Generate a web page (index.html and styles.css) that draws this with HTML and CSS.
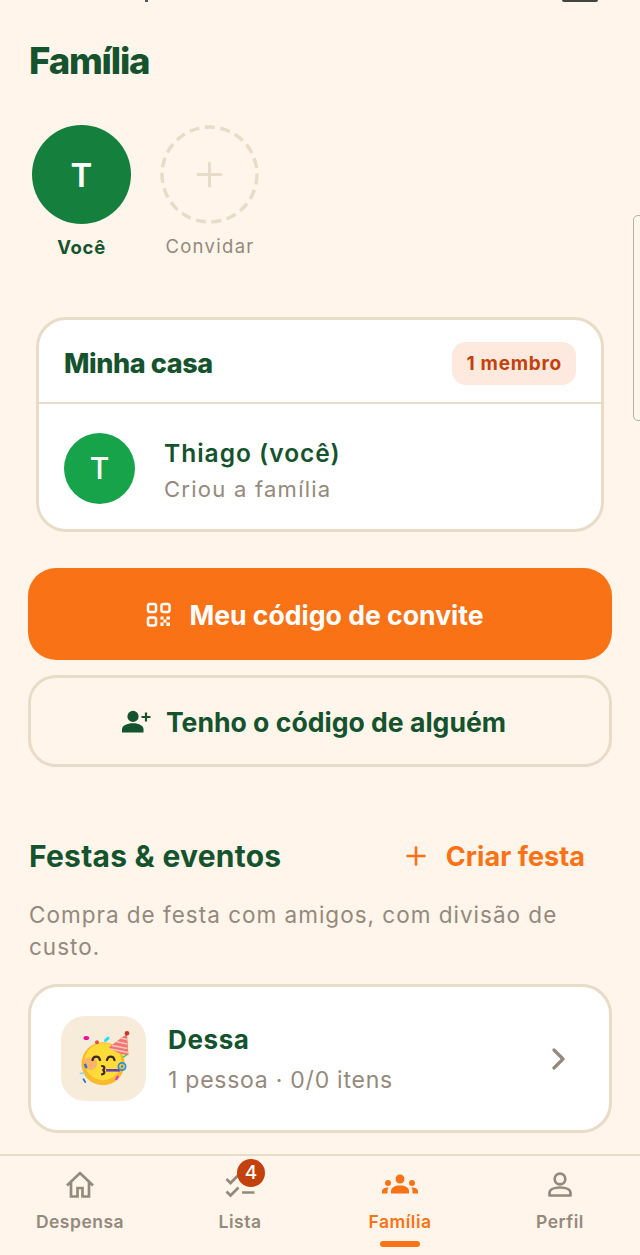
FILE: index.html
```html
<!DOCTYPE html>
<html lang="pt-BR">
<head>
<title>Família</title>
<meta charset="utf-8">
<link rel="stylesheet" href="styles.css">
</head>
<body>

<div class="status-mark"></div>
<div class="status-pill"></div>
<div class="side-handle"></div>

<main class="content">
    <h1 class="page-title">Família</h1>

    <div class="people">
        <div class="person">
            <div class="person-circle person-me">T</div>
            <span class="person-name">Você</span>
        </div>
        <div class="person">
            <svg class="person-circle" width="99" height="99" viewBox="0 0 99 99" fill="none" stroke="#E8DCC8">
                <circle cx="49.500" cy="49.500" r="47.500" stroke-width="3.500" stroke-dasharray="10 5.630"/>
                <path d="M38 49.500h23M49.500 38v23" stroke-width="3" stroke-linecap="round"/>
            </svg>
            <span class="person-name person-invite">Convidar</span>
        </div>
    </div>

    <section class="house">
        <div class="house-head">
            <h2 class="house-title">Minha casa</h2>
            <span class="house-badge">1 membro</span>
        </div>
        <div class="house-row">
            <div class="member-circle">T</div>
            <div class="member-info">
                <div class="member-name">Thiago (você)</div>
                <div class="member-sub">Criou a família</div>
            </div>
        </div>
    </section>

    <button class="btn btn-orange">
        <svg width="26" height="26" viewBox="0 0 26 26" fill="none" stroke="#fff" stroke-width="2.500">
            <rect x="2" y="2" width="8" height="8" rx="2"/>
            <rect x="15.500" y="2" width="8" height="8" rx="2"/>
            <rect x="2" y="15.500" width="8" height="8" rx="2"/>
            <path d="M14.500 14.500h3v3h-3zM20.500 14.500h3.500v3h-3.500zM17.500 17.500h3v3h-3zM14.500 20.500h3V24h-3zM20.500 20.500h3.500V24h-3.500z" fill="#fff" stroke="none"/>
        </svg>
        Meu código de convite
    </button>
    <button class="btn btn-outline">
        <svg width="30" height="24" viewBox="0 0 30 24" fill="#14532D">
            <circle cx="12" cy="6.400" r="5.600"/>
            <path d="M1 22.500v-3.200c0-3.600 5-6 11-6s10.500 2.400 10.500 6v3.200z"/>
            <path d="M25 2.500v9M20.500 7h9" stroke="#14532D" stroke-width="2.200" fill="none"/>
        </svg>
        Tenho o código de alguém
    </button>

    <div class="parties-head">
        <h2 class="parties-title">Festas &amp; eventos</h2>
        <div class="parties-new">
            <svg width="22" height="22" viewBox="0 0 22 22"><path d="M11 2.500v17M2.500 11h17" stroke="#F97316" stroke-width="2.600" stroke-linecap="round" fill="none"/></svg>
            <span>Criar festa</span>
        </div>
    </div>
    <p class="parties-text">Compra de festa com amigos, com divisão de custo.</p>

    <div class="party">
        <div class="party-icon">
            <svg width="85" height="85" viewBox="0 0 85 85">
                <circle cx="42" cy="47.700" r="21.500" fill="#FBB92D"/>
                <circle cx="42" cy="45.700" r="18.500" fill="#FDDC3A"/>
                <circle cx="29.500" cy="47.700" r="6.500" fill="#F8A87A" opacity=".75"/>
                <path d="M47.500 31.500L66 17.700l1.500 21.500c-7-.5-14-3.200-19.700-7.700z" fill="#F0776F"/>
                <path d="M51 29.500l15.500 3M55 25.500l11 2.500M59 22l7 1.500M49.500 33l17.500 3.500" stroke="#FBC4BE" stroke-width="1.500" fill="none"/>
                <circle cx="66" cy="17.200" r="2.300" fill="#C8322D"/>
                <path d="M31.500 44c1-4.500 6.500-4.500 7.500 0M46 44c1-4.500 6.500-4.500 7.500 0" stroke="#3E2723" stroke-width="2.300" stroke-linecap="round" fill="none"/>
                <path d="M41 50c3 0 3 3.500 .5 4 2.500 .6 2.500 4-.5 4.300" stroke="#3E2723" stroke-width="2.200" stroke-linecap="round" fill="none"/>
                <path d="M45 54.300h14" stroke="#6A3FB5" stroke-width="2.600" fill="none"/>
                <circle cx="61" cy="50.500" r="3.600" fill="none" stroke="#2E8FD6" stroke-width="1.800"/>
                <circle cx="61" cy="50.500" r="1.200" fill="#2E8FD6"/>
                <ellipse cx="25.300" cy="22" rx="2.800" ry="2" fill="#F00E9A"/>
                <circle cx="36" cy="26.300" r="2" fill="#E5533D"/>
                <path d="M44.500 24.500l2.500-2.300" stroke="#22E0F0" stroke-width="3" stroke-linecap="round"/>
                <path d="M62.500 41l3-2" stroke="#3CCB3C" stroke-width="1.500" stroke-linecap="round"/>
                <path d="M24.200 48.800l1 2.400" stroke="#2E6FE0" stroke-width="2.400" stroke-linecap="round"/>
                <path d="M19.500 57.300h3.500" stroke="#8FD8F0" stroke-width="1.800" stroke-linecap="round"/>
                <path d="M22.500 63.300l1.700 2.700" stroke="#2E6FE0" stroke-width="1.800" stroke-linecap="round"/>
                <path d="M55.300 63l1.300-2.200" stroke="#E040C0" stroke-width="2.400" stroke-linecap="round"/>
            </svg>
        </div>
        <div class="party-info">
            <div class="party-name">Dessa</div>
            <div class="party-sub">1 pessoa · 0/0 itens</div>
        </div>
        <svg class="party-arrow" width="16" height="22" viewBox="0 0 16 22"><path d="M3 2l9 9-9 9" stroke="#94897C" stroke-width="3.200" stroke-linecap="round" stroke-linejoin="round" fill="none"/></svg>
    </div>
</main>

<nav class="tabs">
    <div class="tab">
        <svg width="30" height="28" viewBox="0 0 30 28" fill="none" stroke="#94897C" stroke-width="2.700"><path d="M2 14.500L15 2l13 12.500M6 11.500V25.500h6.500V17h5v8.500H24V11.500"/></svg>
        <span>Despensa</span>
    </div>
    <div class="tab">
        <div class="tab-icon">
            <svg width="30" height="28" viewBox="0 0 30 28" fill="none" stroke="#94897C" stroke-width="2.700"><path d="M1.500 8l4 4 8-8M1.500 20.500l4 4 8-8M17 21.500h12.500"/></svg>
            <span class="tab-count">4</span>
        </div>
        <span>Lista</span>
    </div>
    <div class="tab tab-on">
        <svg width="36" height="28" viewBox="0 0 36 28" fill="#F97316">
            <circle cx="18" cy="8" r="4.500"/>
            <circle cx="6" cy="12" r="3"/>
            <circle cx="30" cy="12" r="3"/>
            <path d="M9 22.500v-2.500c0-3.500 4-5.500 9-5.500s9 2 9 5.500v2.500z"/>
            <path d="M0 22.500v-2c0-2.500 2.500-3.800 6.500-3.900-.6 1-1 2.200-1 3.400v2.500zM36 22.500v-2c0-2.500-2.500-3.800-6.500-3.900.6 1 1 2.200 1 3.400v2.500z"/>
        </svg>
        <span>Família</span>
    </div>
    <div class="tab">
        <svg width="28" height="28" viewBox="0 0 28 28" fill="none" stroke="#94897C" stroke-width="2.700"><circle cx="14" cy="8" r="5.300"/><path d="M3.500 24.500v-2.500c0-3.500 4.500-5.500 10.500-5.500s10.500 2 10.500 5.500v2.500z" stroke-linejoin="round"/></svg>
        <span>Perfil</span>
    </div>
</nav>

</body>
</html>
```

FILE: styles.css
```css
* {
    box-sizing: border-box;
}

html,
body {
    margin: 0;
    height: 100%;
}

body {
    position: relative;
    width: 640px;
    height: 1255px;
    overflow: hidden;
    display: flex;
    flex-direction: column;
    background-color: #FFF5EA;
    font-family: Inter, "Liberation Sans", sans-serif;
    color: #14532D;
}

/* bits of the system ui that stay on top of the page */
.status-mark {
    position: absolute;
    left: 145px;
    top: 0;
    width: 3px;
    height: 2px;
    background-color: #555;
}

.status-pill {
    position: absolute;
    left: 562px;
    top: 0;
    width: 36px;
    height: 2px;
    background-color: #444;
    border-radius: 0 0 5px 5px;
}

.side-handle {
    position: absolute;
    left: 633px;
    top: 215px;
    width: 12px;
    height: 206px;
    border: 1.5px solid #B5B0A8;
    border-radius: 5px;
}

.content {
    flex: 1;
    padding: 41px 28px 0;
}

.page-title {
    margin: 0 0 0 1px;
    font-size: 36.500px;
    line-height: 40px;
    font-weight: 800;
    letter-spacing: -1.200px;
}

.people {
    display: flex;
    gap: 29px;
    margin: 44px 0 0 4px;
}

.person {
    display: flex;
    flex-direction: column;
    align-items: center;
    gap: 11px;
    width: 99px;
}

.person-circle {
    width: 99px;
    height: 99px;
    border-radius: 50%;
    display: flex;
    align-items: center;
    justify-content: center;
}

.person-me {
    background-color: #15803D;
    color: #fff;
    font-size: 33px;
    font-weight: 600;
}

.person-name {
    font-size: 18.500px;
    line-height: 24px;
    font-weight: 700;
    letter-spacing: .7px;
}

.person-invite {
    margin: -1px 0 0 1px;
    font-weight: 400;
    color: #94897C;
    letter-spacing: 1.300px;
}

.house {
    margin: 58px 8px 0;
    background-color: #fff;
    border: 3px solid #E8DCC8;
    border-radius: 30px;
    overflow: hidden;
}

.house-head {
    display: flex;
    align-items: center;
    justify-content: space-between;
    height: 84px;
    padding: 4px 25px 0;
    border-bottom: 2px solid #E8DCC8;
}

.house-title {
    margin: 0;
    font-size: 27px;
    font-weight: 800;
    letter-spacing: -.4px;
}

.house-badge {
    height: 43px;
    padding: 0 14px;
    display: flex;
    align-items: center;
    border-radius: 14px;
    background-color: #FDE9DD;
    color: #C2410C;
    font-size: 19px;
    font-weight: 700;
    letter-spacing: .75px;
}

.house-row {
    display: flex;
    align-items: center;
    gap: 29px;
    height: 125px;
    padding: 3px 25px 0;
}

.member-info {
    padding-top: 6px;
}

.member-circle {
    width: 71px;
    height: 71px;
    flex: none;
    border-radius: 50%;
    background-color: #16A34A;
    color: #fff;
    font-size: 30px;
    font-weight: 500;
    display: flex;
    align-items: center;
    justify-content: center;
}

.member-name {
    font-size: 24.500px;
    line-height: 32px;
    font-weight: 600;
    letter-spacing: 1px;
}

.member-sub {
    margin-top: 4px;
    font-size: 22px;
    line-height: 32px;
    color: #94897C;
    letter-spacing: 1.250px;
}

.btn {
    display: flex;
    align-items: center;
    justify-content: center;
    gap: 17px;
    width: 584px;
    height: 92px;
    border-radius: 28px;
    font-family: inherit;
    font-size: 26.600px;
    font-weight: 700;
}

.btn-orange {
    margin-top: 36px;
    padding: 2px 10px 0 0;
    border: 0;
    background-color: #F97316;
    color: #fff;
}

.btn-outline {
    margin-top: 15px;
    padding: 1px 13px 0 0;
    gap: 15px;
    border: 3px solid #E8DCC8;
    background-color: transparent;
    color: #14532D;
}

.parties-head {
    display: flex;
    align-items: center;
    justify-content: space-between;
    margin-top: 69px;
    height: 40px;
    padding-right: 27px;
}

.parties-title {
    margin: 0 0 0 1px;
    font-size: 30px;
    font-weight: 700;
    letter-spacing: .25px;
}

.parties-new {
    display: flex;
    align-items: center;
    gap: 19px;
    color: #F97316;
    font-size: 27px;
    font-weight: 700;
    letter-spacing: .05px;
}

.parties-text {
    margin: 23px 0 0 1px;
    font-size: 22.500px;
    line-height: 32px;
    color: #94897C;
    letter-spacing: 1px;
}

.party {
    display: flex;
    align-items: center;
    height: 149px;
    margin-top: 21px;
    padding: 0 42px 0 30px;
    background-color: #fff;
    border: 3px solid #E8DCC8;
    border-radius: 30px;
}

.party-icon {
    width: 85px;
    height: 85px;
    flex: none;
    border-radius: 24px;
    background-color: #F7EBD9;
}

.party-info {
    flex: 1;
    margin-left: 22px;
    padding-top: 1px;
}

.party-name {
    font-size: 26px;
    line-height: 34px;
    font-weight: 700;
    letter-spacing: .6px;
}

.party-sub {
    margin-top: 7px;
    font-size: 23px;
    line-height: 32px;
    color: #94897C;
    letter-spacing: .75px;
}

.tabs {
    display: flex;
    height: 101px;
    border-top: 2px solid #E8DCC8;
}

.tab {
    position: relative;
    flex: 1;
    display: flex;
    flex-direction: column;
    align-items: center;
    padding-top: 15px;
    gap: 11px;
    font-size: 17.500px;
    line-height: 24px;
    font-weight: 600;
    letter-spacing: .5px;
    color: #94897C;
}

.tab-icon {
    position: relative;
    height: 28px;
}

.tab-count {
    position: absolute;
    left: 12px;
    top: -12px;
    width: 28px;
    height: 28px;
    border-radius: 50%;
    background-color: #C2410C;
    color: #fff;
    font-size: 19px;
    line-height: 28px;
    font-weight: 500;
    text-align: center;
    letter-spacing: 0;
}

.tab-on {
    color: #F97316;
}

.tab-on::after {
    content: "";
    position: absolute;
    left: 60px;
    top: 85px;
    width: 40px;
    height: 6px;
    border-radius: 3px;
    background-color: #F97316;
}
```
